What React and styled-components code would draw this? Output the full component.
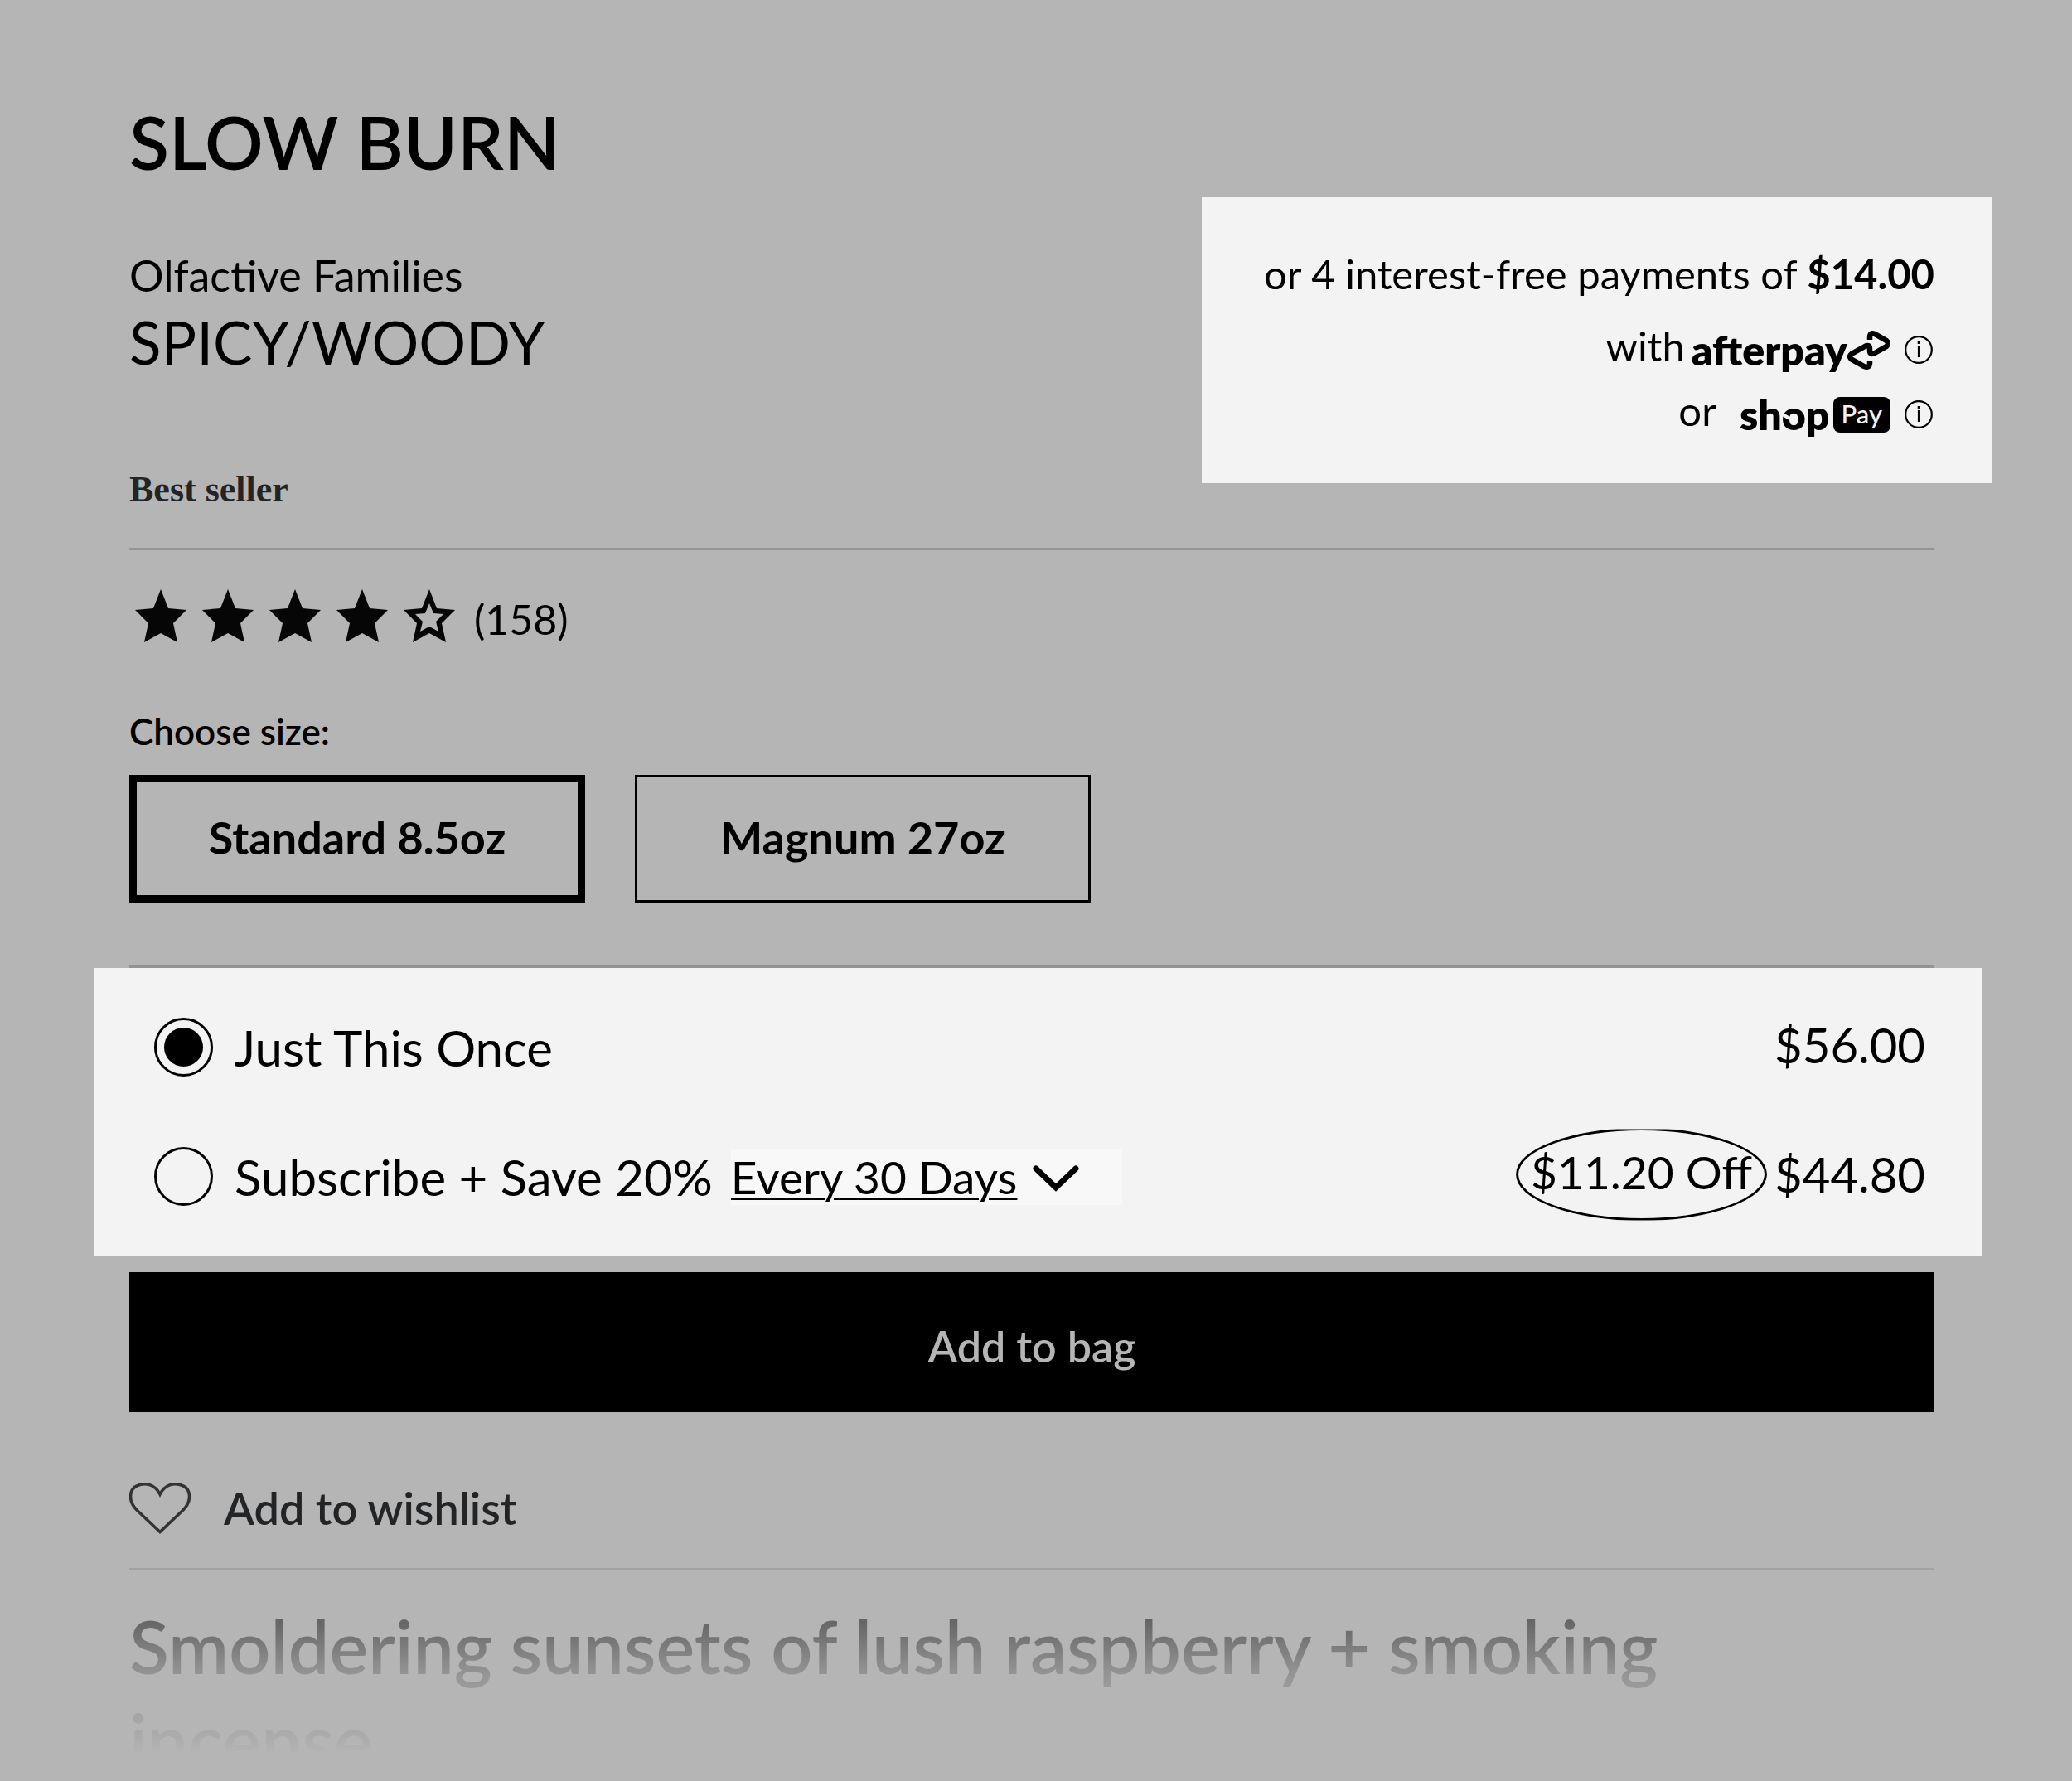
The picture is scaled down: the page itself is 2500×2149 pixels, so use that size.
import { useState } from "react";
import styled, { createGlobalStyle } from "styled-components";

const GlobalStyle = createGlobalStyle`
  * {
    box-sizing: border-box;
  }
  body {
    margin: 0;
    background-color: #b5b5b5;
    font-family: Lato, "Open Sans", sans-serif;
    color: #000;
  }
  h1, h2, p, fieldset {
    margin: 0;
    padding: 0;
    border: none;
  }
  button, select {
    font-family: inherit;
    color: inherit;
    border-radius: 0;
    cursor: pointer;
  }
`;

const Container = styled.main`
  padding: 119px 166px 0 156px;
`;

const Header = styled.header`
  display: flex;
  justify-content: space-between;
  align-items: flex-start;
`;

const Title = styled.h1`
  font-size: 88px;
  line-height: 104px;
  font-weight: 600;
  text-transform: uppercase;
`;

const FamilyLabel = styled.p`
  margin-top: 77px;
  font-size: 52px;
  line-height: 64px;
`;

const Family = styled.p`
  margin-top: 7px;
  font-size: 71px;
  line-height: 84px;
`;

const Tag = styled.p`
  margin-top: 108px;
  font-family: "Liberation Serif", serif;
  font-size: 44px;
  line-height: 56px;
  font-weight: 700;
  color: #222425;
`;

const Payments = styled.section`
  margin: 119px -70px 0 0;
  padding: 60px 70px 56px 75px;
  background-color: #f3f3f3;
  display: flex;
  flex-direction: column;
  align-items: flex-end;
  gap: 14px;
`;

const Installments = styled.p`
  margin-bottom: 9px;
  font-size: 49px;
  line-height: 64px;
`;

const Provider = styled.div`
  height: 64px;
  display: flex;
  gap: ${(props) => props.$gap};
  font-size: 49px;
  line-height: 64px;
`;

const Brand = styled.span`
  margin-top: 12px;
  height: 50px;
  display: flex;
  align-items: center;
  font-size: 50px;
  line-height: 50px;
  font-weight: 800;
`;

const ShopO = styled.span`
  position: relative;
  &::before {
    content: "";
    position: absolute;
    left: 0;
    top: 31px;
    width: 12px;
    height: 4px;
    background-color: #f3f3f3;
    transform: rotate(30deg);
  }
`;

const PayBadge = styled.span`
  height: 43px;
  margin: 0 0 0 4px;
  padding: 0 10px;
  border-radius: 8px;
  background-color: #000;
  color: #f3f3f3;
  font-size: 31px;
  line-height: 40px;
  font-weight: 500;
`;

const InfoButton = styled.button`
  margin: 0 2px 0 17px;
  padding: 0;
  border: none;
  background: none;
  display: flex;
`;

const Divider = styled.hr`
  margin: ${(props) => props.$top} 0 0;
  height: ${(props) => props.$thick || "3px"};
  border: none;
  background-color: ${(props) => props.$color || "#939393"};
`;

const Rating = styled.div`
  margin-top: 47px;
  padding-left: 7px;
  display: flex;
  align-items: flex-start;
`;

const Stars = styled.div`
  display: flex;
  gap: 19px;
`;

const ReviewCount = styled.a`
  margin-left: 23px;
  font-size: 50px;
  line-height: 72px;
  color: inherit;
  text-decoration: none;
`;

const SizeTitle = styled.h2`
  margin-top: 73px;
  font-size: 44px;
  line-height: 52px;
  font-weight: 600;
`;

const Sizes = styled.div`
  margin-top: 27px;
  display: flex;
  gap: 60px;
`;

const SizeButton = styled.button`
  width: 550px;
  height: 154px;
  padding: 0 0 4px;
  border: ${(props) => (props.$selected ? "9px" : "3px")} solid #000;
  background: none;
  font-size: 54px;
  font-weight: 700;
`;

const Purchase = styled.fieldset`
  margin: 0 -58px 0 -42px;
  padding: 60px 69px 60px 72px;
  background-color: #f3f3f3;
  display: flex;
  flex-direction: column;
  gap: 85px;
`;

const Option = styled.div`
  height: 71px;
  display: flex;
  align-items: center;
  font-size: 60px;
  line-height: 68px;
`;

const Radio = styled.input`
  appearance: none;
  width: 71px;
  height: 71px;
  margin: 0 26px 0 0;
  padding: 9px;
  border: 3px solid #000;
  border-radius: 50%;
  &:checked {
    background-color: #000;
    background-clip: content-box;
  }
`;

const Frequency = styled.div`
  position: relative;
  width: 472px;
  margin-left: 22px;
`;

const FrequencySelect = styled.select`
  appearance: none;
  display: block;
  width: 100%;
  height: 68px;
  padding: 0;
  border: none;
  background-color: #f8f8f8;
  font-size: 55px;
  line-height: 68px;
  text-decoration: underline;
  text-decoration-thickness: 3px;
  text-underline-offset: 4px;
`;

const Chevron = styled.svg`
  position: absolute;
  top: 16px;
  right: 50px;
  pointer-events: none;
`;

const Price = styled.span`
  margin-left: auto;
  padding-bottom: 6px;
  display: flex;
  align-items: center;
  gap: 9px;
  font-size: 58px;
`;

const Savings = styled.span`
  width: 303px;
  height: 112px;
  border: 3px solid #000;
  border-radius: 50%;
  font-size: 55px;
  line-height: 100px;
  text-align: center;
  clip-path: inset(2px 0 0 0);
`;

const AddButton = styled.button`
  display: block;
  width: 100%;
  height: 169px;
  margin-top: 20px;
  padding: 8px 0 0;
  border: none;
  background-color: #000;
  color: #b5b5b5;
  font-size: 52px;
  font-weight: 600;
`;

const WishlistButton = styled.button`
  margin-top: 84px;
  padding: 0;
  border: none;
  background: none;
  display: flex;
  align-items: center;
  gap: 40px;
  font-size: 54px;
  line-height: 64px;
  font-weight: 600;
  color: #222426;
`;

const Description = styled.p`
  margin-top: 35px;
  padding-right: 160px;
  height: 219px;
  font-size: 88px;
  line-height: 113px;
  font-weight: 600;
  mask-image: linear-gradient(
    rgba(0, 0, 0, 0.5) 0px,
    rgba(0, 0, 0, 0.44) 26px,
    rgba(0, 0, 0, 0.17) 92px,
    rgba(0, 0, 0, 0.09) 138px,
    rgba(0, 0, 0, 0.05) 165px,
    rgba(0, 0, 0, 0) 186px
  );
`;

const STAR = "M31 0L40 23L62 25L46 41L51 64L31 53L11 64L16 41L0 25L22 23Z";

const Star = ({ filled }) => (
  <svg width="62" height="64" viewBox="0 0 62 64">
    <path d={STAR} fill="#060606" />
    {!filled && (
      <path
        d="M31 17L36 29L48 30L39 39L42 51L31 45L20 51L23 39L14 30L26 29Z"
        fill="#b5b5b5"
      />
    )}
  </svg>
);

const Info = ({ label }) => (
  <InfoButton aria-label={label}>
    <svg width="34" height="34" viewBox="0 0 34 34" fill="none" stroke="#000">
      <circle cx="17" cy="17" r="15.8" strokeWidth="2.2" />
      <path d="M17 12v14" strokeWidth="2.2" />
      <path d="M17 7v3" strokeWidth="2.6" />
    </svg>
  </InfoButton>
);

const AfterpayMark = () => (
  <svg width="52" height="47" viewBox="0 0 52 47" fill="none">
    <path
      d="M27 11V8Q27 1.500 33 4L47 12Q51 15.500 47 19L33 27Q27 30 27 24V22Q27 16 21 19L5 28Q1 31 5 34.500L20 43Q27 45.500 27 39V37"
      stroke="#000"
      strokeWidth="6.500"
    />
  </svg>
);

const Heart = () => (
  <svg width="74" height="62" viewBox="0 0 74 62" fill="none">
    <path
      d="M37 59.500L9 33C-2 22 0 8 9 4C19-1 31 2 37 14C43 2 55-1 65 4C74 8 76 22 65 33Z"
      stroke="#333"
      strokeWidth="3.600"
    />
  </svg>
);

const sizes = ["Standard 8.5oz", "Magnum 27oz"];

const App = () => {
  const [size, setSize] = useState(sizes[0]);
  const [plan, setPlan] = useState("once");

  return (
    <>
      <GlobalStyle />
      <Container>
        <Header>
          <div>
            <Title>Slow Burn</Title>
            <FamilyLabel>Olfactive Families</FamilyLabel>
            <Family>SPICY/WOODY</Family>
            <Tag>Best seller</Tag>
          </div>
          <Payments>
            <Installments>
              or 4 interest-free payments of <b>$14.00</b>
            </Installments>
            <Provider $gap="8px">
              with
              <Brand>
                afterpay
                <AfterpayMark />
                <Info label="About Afterpay" />
              </Brand>
            </Provider>
            <Provider $gap="28px">
              or
              <Brand>
                <span>
                  sh<ShopO>o</ShopO>p
                </span>
                <PayBadge>Pay</PayBadge>
                <Info label="About Shop Pay" />
              </Brand>
            </Provider>
          </Payments>
        </Header>
        <Divider $top="42px" />
        <Rating>
          <Stars>
            {[1, 2, 3, 4, 5].map((n) => (
              <Star key={n} filled={n < 5} />
            ))}
          </Stars>
          <ReviewCount href="#reviews">(158)</ReviewCount>
        </Rating>
        <SizeTitle>Choose size:</SizeTitle>
        <Sizes>
          {sizes.map((item) => (
            <SizeButton
              key={item}
              $selected={item === size}
              aria-pressed={item === size}
              onClick={() => setSize(item)}
            >
              {item}
            </SizeButton>
          ))}
        </Sizes>
        <Divider $top="75px" $thick="4px" />
        <Purchase>
          <Option>
            <Radio
              type="radio"
              name="plan"
              id="once"
              checked={plan === "once"}
              onChange={() => setPlan("once")}
            />
            <label htmlFor="once">Just This Once</label>
            <Price>$56.00</Price>
          </Option>
          <Option>
            <Radio
              type="radio"
              name="plan"
              id="subscribe"
              checked={plan === "subscribe"}
              onChange={() => setPlan("subscribe")}
            />
            <label htmlFor="subscribe">Subscribe + Save 20%</label>
            <Frequency>
              <FrequencySelect aria-label="Delivery frequency">
                <option>Every 30 Days</option>
                <option>Every 60 Days</option>
              </FrequencySelect>
              <Chevron width="60" height="40" viewBox="0 0 60 40" fill="none">
                <path
                  d="M6 8L30 31L54 8"
                  stroke="#000"
                  strokeWidth="7"
                  strokeLinecap="round"
                />
              </Chevron>
            </Frequency>
            <Price>
              <Savings>$11.20 Off</Savings>
              $44.80
            </Price>
          </Option>
        </Purchase>
        <AddButton>Add to bag</AddButton>
        <WishlistButton>
          <Heart />
          Add to wishlist
        </WishlistButton>
        <Divider $top="40px" $color="#a2a2a2" />
        <Description>
          Smoldering sunsets of lush raspberry + smoking incense
        </Description>
      </Container>
    </>
  );
};

export default App;
